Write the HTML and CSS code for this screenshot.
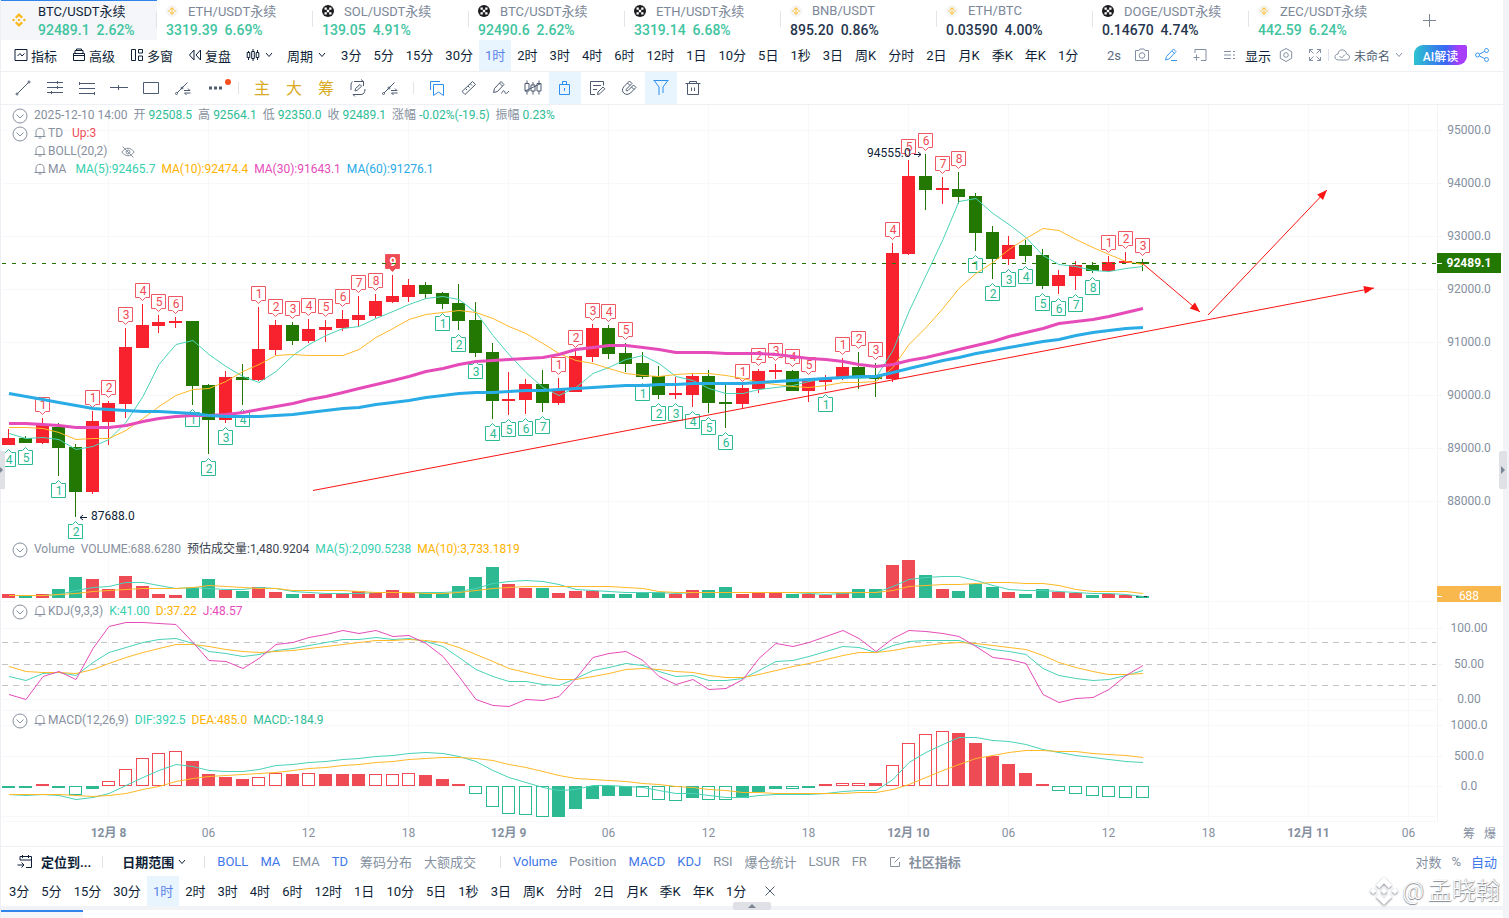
FILE: index.html
```
<!DOCTYPE html>
<html lang="zh-CN">
<head>
    <meta charset="UTF-8">
    <meta name="viewport" content="width=device-width, initial-scale=1.0">
    <title>BTC/USDT永续 92489.1</title>
    <link rel="stylesheet" href="styles.css">
</head>
<body>
    <!-- 图标 -->
    <svg class="sprite" aria-hidden="true">
        <symbol id="i-bnb" viewBox="0 0 14 14"><path fill="#fbb81c" d="M7 0l4 4-1.600 1.600L7 3.200 4.600 5.600 3 4zM1.600 5.400L3.200 7 1.600 8.600 0 7zM12.400 5.400L14 7l-1.600 1.600L10.800 7zM7 5.400L8.600 7 7 8.600 5.400 7zM3 10l1.600-1.600L7 10.800l2.400-2.400L11 10l-4 4z"/></symbol>
        <symbol id="i-bnb-round" viewBox="0 0 12 12"><circle cx="6" cy="6" r="6" fill="#f5f5f5"/><path fill="#fcc544" d="M6 2l2.200 2.200-1 1L6 4 4.800 5.200l-1-1zM3 5l1 1-1 1-1-1zM9 5l1 1-1 1-1-1zM6 5l1 1-1 1-1-1zM3.800 7.800l1-1L6 8l1.200-1.200 1 1L6 10z"/></symbol>
        <symbol id="i-okx" viewBox="0 0 12 12"><circle cx="6" cy="6" r="6" fill="#1b1b1f"/><path fill="#fff" d="M2.500 2.500h2.300v2.300H2.500zM7.200 2.500h2.300v2.300H7.200zM4.800 4.800h2.400v2.400H4.800zM2.500 7.200h2.300v2.300H2.500zM7.200 7.200h2.300v2.300H7.200z"/></symbol>
        <symbol id="i-down" viewBox="0 0 10 10"><path d="M2 3l3 3.500L8 3"/></symbol>
        <symbol id="i-indicator" viewBox="0 0 14 14"><path d="M1 1.500h12v11H1zM3.500 8L6 5.500 8 8l2.500-2.500"/></symbol>
        <symbol id="i-box" viewBox="0 0 14 14"><path d="M1.500 5.500h11v7h-11zM3 5.500v-3h8v3M4.500 2.500V1h5v1.500M1 7.500h12"/></symbol>
        <symbol id="i-multi" viewBox="0 0 14 14"><path d="M1.500 1.500h4v11h-4zM8.500 1.500h4v3.500h-4zM8.500 8h4v4.500h-4z"/></symbol>
        <symbol id="i-replay" viewBox="0 0 14 14"><path d="M6 2L1.500 7 6 12zM12.500 2L8 7l4.500 5z"/></symbol>
        <symbol id="i-candles" viewBox="0 0 14 14"><path d="M2.500 3v1.500M2.500 9.500V12M1.200 4.500h2.600v5H1.200zM7 1v2.500M7 10.500V13M5.700 3.500h2.600v7H5.700zM11.500 2v2.500M11.500 9.500V12M10.200 4.500h2.600v5h-2.600z"/></symbol>
        <symbol id="i-camera" viewBox="0 0 16 16"><path d="M1.500 3.500h3.500l1-1.500h4l1 1.500h3.500v10h-13z"/><circle cx="8" cy="8.500" r="2.800"/></symbol>
        <symbol id="i-pen" viewBox="0 0 16 16"><path d="M2.500 13l1-3.500 7-7.500 2.500 2.500-7 7.500zM9 4l2.500 2.500M8 13.500h6"/></symbol>
        <symbol id="i-addpane" viewBox="0 0 16 16"><path d="M3 6V2.500h11v11H9M1.500 10.500h6M4.500 7.500v6"/></symbol>
        <symbol id="i-list" viewBox="0 0 16 16"><path d="M3 4.500h7M3 8h7M3 11.500h7M12 4.500h2M12 8h2M12 11.500h2"/></symbol>
        <symbol id="i-hex" viewBox="0 0 16 16"><path d="M8 1.500l5.700 3.200v6.600L8 14.500l-5.700-3.200V4.700z"/><circle cx="8" cy="8" r="2.300"/></symbol>
        <symbol id="i-full" viewBox="0 0 16 16"><path d="M2.500 6V2.500H6M2.500 2.500L6.500 6.500M10 2.500h3.500V6M13.500 2.500l-4 4M2.500 10v3.500H6M2.500 13.500l4-4M13.500 10v3.500H10M13.500 13.500l-4-4"/></symbol>
        <symbol id="i-cloud" viewBox="0 0 16 16"><path d="M4.500 13C-.5 12.800.2 7 4 7c.3-5.500 8.200-5.500 8.500 0 4.200.5 3.800 6 0 6zM5.500 9l2 2 3.500-3.500"/></symbol>
        <symbol id="i-share" viewBox="0 0 16 16"><circle cx="3.500" cy="8" r="2"/><circle cx="12.500" cy="3.500" r="2"/><circle cx="12.500" cy="12.500" r="2"/><path d="M5.300 7.100l5.400-2.700M5.300 8.900l5.400 2.700"/></symbol>
        <symbol id="i-line" viewBox="0 0 18 18"><path d="M3.500 14.500l11-11"/><circle cx="3" cy="15" r="1"/><circle cx="15" cy="3" r="1"/></symbol>
        <symbol id="i-hlines" viewBox="0 0 18 18"><path d="M1 3.500h16M1 8.500h16M1 13.500h16M11.500 2v3M5.500 12v3M11.500 7v3"/></symbol>
        <symbol id="i-fib" viewBox="0 0 18 18"><path d="M1 4.500h16M1 9.500h16M1 14.500h16M1.500 3v3M16.500 13v3"/></symbol>
        <symbol id="i-hline" viewBox="0 0 18 18"><path d="M0 8.500h18M8.500 6v5"/></symbol>
        <symbol id="i-rect" viewBox="0 0 18 18"><path d="M1.500 3.500h15v11h-15z"/></symbol>
        <symbol id="i-swap" viewBox="0 0 18 18"><path d="M3 14L13.500 3.500M10 11.500h6l-2-2M16.500 14h-6l2 2"/><circle cx="2.500" cy="14.500" r="1"/><circle cx="8" cy="9" r="1"/></symbol>
        <symbol id="i-dots" viewBox="0 0 18 18"><path fill="currentColor" stroke="none" d="M3 7.500h3v3H3zM8 7.500h3v3H8zM13 7.500h3v3h-3z"/></symbol>
        <symbol id="i-redraw" viewBox="0 0 18 18"><path d="M5 2.500h9.500V7M12 .5L14.500 2.500M16 10c0 3-1 5.500-4 5.500H4L6 17.500M2 11V6c0-1.500.5-2.500 1.500-3.500M6 12l.5-2.500 4.500-4 1.700 1.700-4.500 4z"/></symbol>
        <symbol id="i-mark" viewBox="0 0 18 18"><path d="M2.500 11V2.500H12M5.500 5.500h10v11L10.500 13l-5 3.500z"/></symbol>
        <symbol id="i-ruler" viewBox="0 0 18 18"><path d="M2 12.500L12.500 2.500l3 3L5 15.500zM5.500 9.500L7 11M8 7l1.500 1.500M10.500 5L12 6.500"/></symbol>
        <symbol id="i-brush" viewBox="0 0 18 18"><path d="M1.500 13.500l1-4 6.500-7 3 3-6.500 7zM7.500 4l3 3M9.500 14.500c2-4 3-3 3.500-1s2 1 4-1.500"/></symbol>
        <symbol id="i-pattern" viewBox="0 0 18 18"><path d="M3 1.500v3M3 12v3.500M1 4.500h4V12H1zM9 3v3M9 12v3.500M7 6h4v6H7zM15 1.500v3M15 12v3.500M13 4.500h4V12h-4zM1 12L17 4.500"/></symbol>
        <symbol id="i-lock" viewBox="0 0 18 18"><path d="M3.500 5.500h10v10h-10zM6.500 5.500v-3h4v3M8.500 9v3"/></symbol>
        <symbol id="i-note" viewBox="0 0 18 18"><path d="M7 15.500H2.500v-13h13v4M5 6.500h8M5 10.500h4M9.500 15.500l.5-2.500 5-5 1.800 1.800-5 5z"/></symbol>
        <symbol id="i-magnet" viewBox="0 0 18 18"><path d="M9.500 2L4 7.500c-4.500 5 2 10.500 6.500 6.500L16 8.500 13.500 6 8 11.500c-1.500 1-2.500-.5-1.500-1.500L12 4.500zM7.500 4L10 6.500M11.500 8l2.500 2.500"/></symbol>
        <symbol id="i-filter" viewBox="0 0 18 18"><path d="M1.500 1.500h15M2.500 2l4.500 6v8M15.500 2L11 8v6"/></symbol>
        <symbol id="i-trash" viewBox="0 0 18 18"><path d="M1.500 4.500h15M5.500 4.500v-2h7v2M3.500 4.500v11h11v-11M7.500 8.500v3.500M10.500 8.500v3.500"/></symbol>
        <symbol id="i-fold" viewBox="0 0 16 16"><circle cx="8" cy="8" r="7"/><path d="M4.500 6.500L8 10l3.500-3.500"/></symbol>
        <symbol id="i-bell" viewBox="0 0 12 12"><path d="M0.500 9.500h11M2 9.500V5c0-5 8-5 8 0v4.500M4.500 11h3"/></symbol>
        <symbol id="i-eye" viewBox="0 0 14 12"><path d="M1 6c3-5 9-5 12 0-3 5-9 5-12 0zM1.500.5l11 11"/><circle cx="7" cy="6" r="2"/></symbol>
        <symbol id="i-goto" viewBox="0 0 16 16"><path d="M3 6V2.500h11.500v11H9M3 6h11M5.500 1v3M11.500 1v3M.500 11h6M4.500 8.500L7 11l-2.500 2.500"/></symbol>
        <symbol id="i-edit" viewBox="0 0 12 12"><path d="M6 1.500H1.500v9h9V6M5.500 6.500L10.500 1.500"/></symbol>
        <symbol id="i-close" viewBox="0 0 12 12"><path d="M1.500 1.500l9 9M10.500 1.500l-9 9"/></symbol>
    </svg>

    <div class="shell">
        <nav class="tabs">
            <a class="tab tab-active" href="#"><svg class="ico-lg"><use href="#i-bnb"/></svg><span class="tab-name">BTC/USDT永续</span><span class="tab-price up">92489.1&nbsp; 2.62%</span></a>
            <a class="tab" href="#"><svg class="ico-sm"><use href="#i-bnb-round"/></svg><span class="tab-name">ETH/USDT永续</span><span class="tab-price up">3319.39&nbsp; 6.69%</span></a>
            <a class="tab" href="#"><svg class="ico-sm"><use href="#i-okx"/></svg><span class="tab-name">SOL/USDT永续</span><span class="tab-price up">139.05&nbsp; 4.91%</span></a>
            <a class="tab" href="#"><svg class="ico-sm"><use href="#i-okx"/></svg><span class="tab-name">BTC/USDT永续</span><span class="tab-price up">92490.6&nbsp; 2.62%</span></a>
            <a class="tab" href="#"><svg class="ico-sm"><use href="#i-okx"/></svg><span class="tab-name">ETH/USDT永续</span><span class="tab-price up">3319.14&nbsp; 6.68%</span></a>
            <a class="tab" href="#"><svg class="ico-sm"><use href="#i-bnb-round"/></svg><span class="tab-name">BNB/USDT</span><span class="tab-price">895.20&nbsp; 0.86%</span></a>
            <a class="tab" href="#"><svg class="ico-sm"><use href="#i-bnb-round"/></svg><span class="tab-name">ETH/BTC</span><span class="tab-price">0.03590&nbsp; 4.00%</span></a>
            <a class="tab" href="#"><svg class="ico-sm"><use href="#i-okx"/></svg><span class="tab-name">DOGE/USDT永续</span><span class="tab-price">0.14670&nbsp; 4.74%</span></a>
            <a class="tab" href="#"><svg class="ico-sm"><use href="#i-bnb-round"/></svg><span class="tab-name">ZEC/USDT永续</span><span class="tab-price up">442.59&nbsp; 6.24%</span></a>
            <button class="tab-add" aria-label="添加"></button>
        </nav>

        <div class="bar bar-main">
            <button class="menu"><svg class="ico"><use href="#i-indicator"/></svg>指标</button>
            <button class="menu"><svg class="ico"><use href="#i-box"/></svg>高级</button>
            <button class="menu"><svg class="ico"><use href="#i-multi"/></svg>多窗</button>
            <button class="menu"><svg class="ico"><use href="#i-replay"/></svg>复盘</button>
            <button class="menu menu-drop"><svg class="ico"><use href="#i-candles"/></svg><svg class="chev"><use href="#i-down"/></svg></button>
            <button class="menu menu-drop">周期<svg class="chev"><use href="#i-down"/></svg></button>
            <div class="periods"></div>
            <div class="bar-right">
                <span class="delay">2s</span>
                <button class="tool" aria-label="截图"><svg class="ico-m"><use href="#i-camera"/></svg></button>
                <button class="tool blue" aria-label="画图"><svg class="ico-m"><use href="#i-pen"/></svg></button>
                <button class="tool" aria-label="添加窗口"><svg class="ico-m"><use href="#i-addpane"/></svg></button>
                <button class="tool show"><svg class="ico-m"><use href="#i-list"/></svg>显示</button>
                <button class="tool" aria-label="设置"><svg class="ico-m"><use href="#i-hex"/></svg></button>
                <button class="tool" aria-label="全屏"><svg class="ico-m"><use href="#i-full"/></svg></button>
                <i class="sep"></i>
                <button class="layout"><svg class="ico-m"><use href="#i-cloud"/></svg>未命名<svg class="chev"><use href="#i-down"/></svg></button>
                <button class="ai">AI解读</button>
                <button class="tool blue" aria-label="分享"><svg class="ico-m"><use href="#i-share"/></svg></button>
            </div>
        </div>

        <div class="bar bar-draw">
            <button class="draw" aria-label="线段"><svg><use href="#i-line"/></svg></button>
            <button class="draw" aria-label="平行线"><svg><use href="#i-hlines"/></svg></button>
            <button class="draw" aria-label="斐波那契"><svg><use href="#i-fib"/></svg></button>
            <button class="draw" aria-label="水平线"><svg><use href="#i-hline"/></svg></button>
            <button class="draw" aria-label="矩形"><svg><use href="#i-rect"/></svg></button>
            <button class="draw" aria-label="切换"><svg><use href="#i-swap"/></svg></button>
            <button class="draw draw-more" aria-label="更多"><svg><use href="#i-dots"/></svg></button>
            <i class="sep"></i>
            <button class="draw gold">主</button>
            <button class="draw gold">大</button>
            <button class="draw gold">筹</button>
            <button class="draw" aria-label="重画"><svg><use href="#i-redraw"/></svg></button>
            <button class="draw" aria-label="线段切换"><svg><use href="#i-swap"/></svg></button>
            <i class="sep"></i>
            <button class="draw blue" aria-label="书签"><svg><use href="#i-mark"/></svg></button>
            <button class="draw" aria-label="测量"><svg><use href="#i-ruler"/></svg></button>
            <button class="draw" aria-label="画笔"><svg><use href="#i-brush"/></svg></button>
            <button class="draw" aria-label="形态"><svg><use href="#i-pattern"/></svg></button>
            <button class="draw draw-on" aria-label="锁定"><svg><use href="#i-lock"/></svg></button>
            <button class="draw" aria-label="备注"><svg><use href="#i-note"/></svg></button>
            <button class="draw" aria-label="磁铁"><svg><use href="#i-magnet"/></svg></button>
            <button class="draw draw-on" aria-label="过滤"><svg><use href="#i-filter"/></svg></button>
            <button class="draw" aria-label="删除"><svg><use href="#i-trash"/></svg></button>
        </div>

        <main class="chart">
            <section class="pane pane-price">
                <svg class="plot" id="price"></svg>
                <svg class="axis" id="price-axis"></svg>
                <div class="legend">
                    <p><svg class="fold"><use href="#i-fold"/></svg><span>2025-12-10 14:00</span><span>开 <b class="up">92508.5</b></span><span>高 <b class="up">92564.1</b></span><span>低 <b class="up">92350.0</b></span><span>收 <b class="up">92489.1</b></span><span>涨幅 <b class="up">-0.02%(-19.5)</b></span><span>振幅 <b class="up">0.23%</b></span></p>
                    <p><svg class="fold"><use href="#i-fold"/></svg><span class="name"><svg class="bell"><use href="#i-bell"/></svg>TD</span><span class="down">Up:3</span></p>
                    <p><span class="name"><svg class="bell"><use href="#i-bell"/></svg>BOLL(20,2)</span><svg class="eye"><use href="#i-eye"/></svg></p>
                    <p><span class="name"><svg class="bell"><use href="#i-bell"/></svg>MA</span><span class="teal">MA(5):92465.7</span><span class="orange">MA(10):92474.4</span><span class="pink">MA(30):91643.1</span><span class="sky">MA(60):91276.1</span></p>
                </div>
            </section>
            <section class="pane pane-vol">
                <svg class="plot" id="vol"></svg>
                <svg class="axis" id="vol-axis"></svg>
                <div class="legend">
                    <p><svg class="fold"><use href="#i-fold"/></svg><span>Volume</span><span>VOLUME:688.6280</span><span class="dark">预估成交量:1,480.9204</span><span class="teal">MA(5):2,090.5238</span><span class="orange">MA(10):3,733.1819</span></p>
                </div>
            </section>
            <section class="pane pane-kdj">
                <svg class="plot" id="kdj"></svg>
                <svg class="axis" id="kdj-axis"></svg>
                <div class="legend">
                    <p><svg class="fold"><use href="#i-fold"/></svg><span><svg class="bell"><use href="#i-bell"/></svg>KDJ(9,3,3)</span><span class="teal">K:41.00</span><span class="orange">D:37.22</span><span class="pink">J:48.57</span></p>
                </div>
            </section>
            <section class="pane pane-macd">
                <svg class="plot" id="macd"></svg>
                <svg class="axis" id="macd-axis"></svg>
                <div class="legend">
                    <p><svg class="fold"><use href="#i-fold"/></svg><span><svg class="bell"><use href="#i-bell"/></svg>MACD(12,26,9)</span><span class="teal">DIF:392.5</span><span class="orange">DEA:485.0</span><span class="up">MACD:-184.9</span></p>
                </div>
            </section>
            <section class="pane pane-time">
                <svg class="plot" id="time"></svg>
                <div class="axis axis-btns"><button>筹</button><button>爆</button></div>
            </section>
        </main>

        <div class="bar bar-ind">
            <button class="goto"><svg class="ico-m"><use href="#i-goto"/></svg>定位到...</button>
            <i class="sep"></i>
            <button class="range">日期范围<svg class="chev"><use href="#i-down"/></svg></button>
            <i class="sep"></i>
            <div class="inds">
                <button class="on">BOLL</button><button class="on">MA</button><button>EMA</button><button class="on">TD</button><button>筹码分布</button><button>大额成交</button>
            </div>
            <i class="sep"></i>
            <div class="inds">
                <button class="on">Volume</button><button>Position</button><button class="on">MACD</button><button class="on">KDJ</button><button>RSI</button><button>爆仓统计</button><button>LSUR</button><button>FR</button>
            </div>
            <button class="community"><svg class="ico-xs"><use href="#i-edit"/></svg>社区指标</button>
            <div class="inds scale"><button>对数</button><button>%</button><button class="on">自动</button></div>
        </div>
        <div class="bar bar-periods">
            <div class="periods"></div>
            <button class="close" aria-label="关闭"><svg class="ico-sm"><use href="#i-close"/></svg></button>
            <button class="pull pull-bottom" aria-label="展开"></button>
        </div>
        <div class="next"><span class="next-tab"></span></div>

        <button class="pull pull-left" aria-label="展开左侧"></button>
        <button class="pull pull-right" aria-label="展开右侧"></button>
        <div class="watermark"><svg><use href="#i-bnb"/></svg><span>@</span><span>孟晓翰</span></div>
    </div>
    <script src="chart.js"></script>
</body>
</html>
```
FILE: styles.css
```
* {
    box-sizing: border-box;
}

body {
    margin: 0;
    background: #f2f3f7;
    color: #0f1f38;
    font-family: Roboto, "Noto Sans CJK SC", sans-serif;
    font-size: 13px;
    overflow: hidden;
}

button {
    margin: 0;
    padding: 0;
    border: 0;
    background: none;
    color: inherit;
    font: inherit;
    white-space: nowrap;
    cursor: pointer;
}

svg {
    display: block;
    flex: none;
    fill: none;
    stroke: currentColor;
}

.sprite {
    position: absolute;
    width: 0;
    height: 0;
}

.sprite [fill] {
    stroke: none;
}

.shell {
    position: relative;
    min-height: 100vh;
    margin-right: 6px;
    border-left: 1px solid #edeff4;
    background: #fff;
}

.up { color: #2ebd96; }
.down { color: #f04c57; }
.teal { color: #36cfb0; }
.orange { color: #ffb200; }
.pink { color: #e64cb9; }
.sky { color: #2aa9e6; }
.dark { color: #3c4350; }
.blue { color: #3185ea; }

.ico, .ico-lg { width: 14px; height: 14px; }
.ico-sm { width: 12px; height: 12px; }
.ico-xs { width: 12px; height: 12px; }
.ico-m { width: 16px; height: 16px; }
.chev { width: 10px; height: 10px; }

/* 顶部标签 */
.tabs {
    display: flex;
    height: 40px;
}

.tab {
    position: relative;
    display: grid;
    grid-template-columns: 22px auto;
    grid-template-rows: 20px 18px;
    align-items: center;
    align-content: start;
    justify-content: start;
    width: 156px;
    padding: 1px 0 0 9px;
    color: #7c8798;
    text-decoration: none;
}

.tab::after {
    content: "";
    position: absolute;
    right: 0;
    top: 11px;
    height: 16px;
    border-right: 1px solid #e3e5ea;
}

.tab:nth-child(9)::after {
    display: none;
}

.tab-name {
    padding-bottom: 2px;
}

.tab-price {
    grid-column: 1 / 3;
    color: #26364e;
    font-size: 14px;
    font-weight: 500;
}

.tab-price.up {
    color: #41c49f;
}

.tab-active {
    grid-template-columns: 26px auto;
    padding: 0 0 0 11px;
    border-top: 1px solid #3185ea;
    background: #f5f6fa;
    color: #0f1f38;
}

.tab-active svg {
    grid-row: 1 / 3;
}

.tab-active .tab-price {
    grid-column: 2;
}

.tab-add {
    position: relative;
    width: 14px;
    margin-left: 17px;
    background: linear-gradient(#7d8694, #7d8694) center / 13px 1px no-repeat, linear-gradient(#7d8694, #7d8694) center / 1px 13px no-repeat;
}

/* 工具栏 */
.bar {
    display: flex;
    align-items: center;
}

.bar-main {
    height: 32px;
    padding: 0 13px 1px 13px;
    border-bottom: 1px solid #eff0f3;
}

.menu {
    display: flex;
    align-items: center;
    gap: 3px;
    margin-right: 15px;
}

.menu-drop {
    gap: 4px;
    margin-right: 13px;
}

.menu-drop + .menu-drop {
    margin-right: 8px;
}

.periods {
    display: flex;
    height: 31px;
}

.periods button {
    padding: 0 6px 2px;
}

.periods .current {
    background: #e8f4fe;
    color: #5b83ec;
}

.bar-right {
    display: flex;
    align-items: center;
    gap: 13px;
    margin-left: auto;
    color: #8390a3;
}

.bar-right .sep {
    margin: 0 -8px;
}

.bar-right .blue {
    color: #3b98ee;
}

.delay {
    color: #5d6b80;
}

.show {
    display: flex;
    align-items: center;
    gap: 8px;
    margin-right: -6px;
    color: #0f1f38;
}

.show svg {
    color: #8390a3;
}

.layout {
    display: flex;
    align-items: center;
    gap: 4px;
    margin-right: -3px;
    color: #4d5b70;
    font-size: 12px;
}

.layout svg {
    color: #8390a3;
}

.ai {
    width: 53px;
    height: 20px;
    margin-right: -6px;
    border-radius: 9px 2px 9px 0;
    background: linear-gradient(90deg, #2cc4cf, #3a66f5 60%, #a83dfb 85%);
    color: #fff;
    font-size: 12px;
    font-weight: 500;
}

.sep {
    flex: none;
    width: 1px;
    height: 12px;
    background: #dfe2e7;
}

.bar-draw {
    height: 33px;
    padding-left: 6px;
    border-bottom: 1px solid #eff0f3;
    color: #4c5b70;
}

.bar-draw .sep {
    margin: 0 7px;
}

.draw {
    position: relative;
    display: flex;
    align-items: center;
    justify-content: center;
    width: 32px;
    height: 32px;
}

.draw svg {
    width: 18px;
    height: 18px;
}

.draw-on {
    background: #e8f4fe;
    color: #2d8ff0;
}

.draw.blue {
    color: #2d8ff0;
}

.draw-more::after {
    content: "";
    position: absolute;
    right: 0;
    top: 7px;
    width: 6px;
    height: 6px;
    border-radius: 3px;
    background: #f5501e;
}

.gold {
    padding-bottom: 2px;
    color: #d9ab25;
    font-size: 16px;
}

/* 图表 */
.pane {
    position: relative;
    display: flex;
}

.plot {
    flex: 1;
    min-width: 0;
}

.plot, .axis {
    height: 100%;
    stroke: none;
    font-size: 12px;
}

.axis {
    width: 66px;
    color: #8590a0;
}

.pane-price { height: 435px; }
.pane-vol { height: 62px; }
.pane-kdj { height: 109px; }
.pane-macd { height: 111px; }
.pane-time { height: 24px; }

.pane-price .legend {
    top: 1px;
}

.legend {
    position: absolute;
    top: 0;
    left: 33px;
    color: #87909e;
    font-size: 12px;
    line-height: 18px;
    white-space: nowrap;
}

.legend p {
    position: relative;
    display: flex;
    gap: 6px;
    height: 18px;
    margin: 0;
}

.legend b {
    font-weight: 400;
}

.legend span {
    display: flex;
    gap: 3px;
    align-items: center;
}

.legend .name {
    margin-right: 3px;
}

.fold {
    position: absolute;
    left: -22px;
    top: 2px;
    width: 16px;
    height: 16px;
}

.bell {
    width: 12px;
    height: 12px;
    margin-right: -1px;
}

.eye {
    width: 14px;
    height: 12px;
    margin: 4px 0 0 4px;
}

.grid line { stroke: #f8f8fa; }
.grid .dash { stroke: #c4c4c4; stroke-dasharray: 6 5; }
.last { stroke: #237804; stroke-dasharray: 4 6; }
.candle { shape-rendering: crispEdges; }
.rise { fill: #f8222e; stroke: #f8222e; }
.fall { fill: #237804; stroke: #237804; }
.candle rect, .bars rect { stroke: none; }
.pos { fill: #ef4b55; }
.neg { fill: #2dba93; }
.bars .pos-h { fill: #fff; stroke: #ef4b55; }
.bars .neg-h { fill: #fff; stroke: #2dba93; }
.estimate { stroke: #26364e; stroke-dasharray: 3 1; }
.curve { fill: none; stroke-width: 1; stroke-linejoin: round; }
.curve.thick { stroke-width: 3; }
.curve.teal { stroke: #4ad3b8; }
.curve.orange { stroke: #ffb929; }
.curve.pink { stroke: #e64cb9; }
.curve.sky { stroke: #29abe6; }
.td path { fill: #fff; }
.td text { font-size: 12px; text-anchor: middle; }
.td-up path { stroke: #ef5862; }
.td-up text { fill: #ef4b55; }
.td-down path { stroke: #2dba93; }
.td-down text { fill: #2dba93; }
.td-full path { fill: #ef4b55; }
.td-full text { fill: #fff; font-weight: 700; }
.trend { stroke: #fb1414; fill: none; }
.trend-head { fill: #fb1414; }
.extreme { fill: #0f1f38; font-size: 12px; }
.extreme-arrow { fill: none; stroke: #0f1f38; }
.axis text, .day, .hour { fill: #8590a0; text-anchor: middle; }
.day { font-weight: 700; }
.axis .tag-price, .axis .tag-vol { fill: #fff; }
.axis .tag-price { font-weight: 700; }
.axis line { stroke: #f3f4f6; }
.axis .tag-tick { stroke: #fff; }

.axis-btns {
    display: flex;
    align-items: center;
    gap: 9px;
    padding: 0 0 4px 26px;
}

/* 底部 */
.bar-ind {
    height: 30px;
    padding: 0 6px 0 16px;
    border-top: 1px solid #eff0f3;
    color: #8590a0;
}

.goto, .range, .community {
    display: flex;
    align-items: center;
    font-weight: 700;
}

.goto, .range {
    color: #0f1f38;
}

.goto {
    gap: 8px;
    margin-right: 11px;
}

.range {
    gap: 3px;
    margin: 0 17px 0 19px;
}

.inds {
    display: flex;
    gap: 12px;
    margin: 0 22px 0 12px;
}

.inds + .sep {
    margin-left: 2px;
}

.inds .on {
    color: #3f78ea;
}

.community {
    gap: 8px;
    color: #87909e;
}

.scale {
    gap: 10px;
    margin: 0 0 0 auto;
}

.bar-periods {
    position: relative;
    height: 34px;
    padding-left: 2px;
    border-bottom: 4px solid #f2f3f7;
}

.bar-periods .periods {
    height: 30px;
}

.close {
    margin-left: 12px;
    color: #4c5b70;
}

.next {
    height: 8px;
}

.next-tab {
    display: block;
    width: 82px;
    height: 8px;
    border-top: 2px solid #3185ea;
    background: #f5f6fa;
}

.pull {
    position: absolute;
    display: flex;
    align-items: center;
    justify-content: center;
    background: #dfe1e7;
}

.pull::after {
    content: "";
    border: 4px solid transparent;
}

.pull-left {
    left: -1px;
    top: 451px;
    width: 5px;
    height: 38px;
}

.pull-left::after {
    border-width: 3px;
    border-left-color: #7d8694;
}

.pull-right {
    right: -4px;
    top: 451px;
    width: 8px;
    height: 38px;
    border-radius: 2px;
}

.pull-right::after {
    margin-left: 4px;
    border-left-color: #7d8694;
}

.pull-bottom {
    left: 732px;
    bottom: -4px;
    width: 38px;
    height: 8px;
    border-radius: 2px;
}

.pull-bottom::after {
    margin-bottom: 4px;
    border-bottom-color: #7d8694;
}

.watermark {
    position: absolute;
    right: 3px;
    top: 876px;
    display: flex;
    align-items: center;
    gap: 4px;
    height: 30px;
    color: #fff;
    font-size: 24px;
    font-weight: 300;
    line-height: 30px;
    text-shadow: 0 1px 1px #7d828c, 1px 0 1px #a4a8b0;
}

.watermark svg {
    width: 28px;
    height: 28px;
    filter: grayscale(1) brightness(2) drop-shadow(0 1px 1px #7d828c);
}
```
FILE: chart.js
```
// 周期按钮（顶部和底部共用）
const periods = ["3分", "5分", "15分", "30分", "1时", "2时", "3时", "4时", "6时", "12时", "1日", "10分", "5日", "1秒", "3日", "周K", "分时", "2日", "月K", "季K", "年K", "1分"];

document.querySelectorAll(".periods").forEach(box => {
    box.innerHTML = periods.map(p => `<button${p === "1时" ? ' class="current"' : ""}>${p}</button>`).join("");
});

// K线: 方向, 实体上, 实体下, 最高, 最低
const candles = [
    ["r", 438, 445, 429, 445], ["g", 438, 443, 436, 443], ["r", 425, 443, 418, 444], ["g", 427, 448, 423, 476],
    ["g", 447, 492, 444, 517], ["r", 421, 492, 411, 494], ["r", 403, 422, 401, 445], ["r", 347, 404, 328, 418],
    ["r", 325, 348, 304, 348], ["r", 322, 326, 315, 333], ["r", 321, 323, 317, 328], ["g", 321, 386, 321, 405],
    ["g", 385, 420, 384, 454], ["r", 377, 420, 371, 423], ["g", 377, 380, 364, 405], ["r", 349, 380, 307, 381],
    ["r", 325, 350, 320, 355], ["g", 325, 341, 322, 345], ["r", 329, 341, 319, 343], ["r", 327, 330, 320, 342],
    ["r", 319, 328, 310, 331], ["r", 315, 320, 296, 326], ["r", 301, 316, 294, 318], ["r", 296, 302, 275, 303],
    ["r", 285, 297, 279, 302], ["g", 285, 294, 282, 299], ["g", 293, 304, 292, 309], ["g", 303, 321, 284, 330],
    ["g", 320, 353, 302, 357], ["g", 352, 401, 343, 419], ["r", 399, 401, 372, 415], ["r", 384, 400, 379, 414],
    ["g", 384, 403, 370, 412], ["r", 390, 403, 378, 405], ["r", 356, 392, 351, 392], ["r", 328, 357, 324, 362],
    ["g", 328, 354, 325, 359], ["g", 353, 364, 343, 372], ["g", 363, 377, 352, 379], ["g", 376, 395, 366, 399],
    ["r", 393, 395, 377, 399], ["r", 376, 395, 373, 407], ["g", 376, 403, 370, 413], ["g", 402, 404, 385, 428],
    ["r", 388, 404, 385, 409], ["r", 371, 389, 369, 393], ["r", 370, 372, 364, 379], ["g", 371, 391, 370, 391],
    ["r", 381, 391, 378, 402], ["r", 379, 382, 375, 390], ["r", 367, 377, 358, 380], ["g", 367, 376, 352, 389],
    ["g", 376, 379, 363, 397], ["r", 253, 379, 243, 382], ["r", 176, 254, 160, 255], ["g", 176, 190, 154, 210],
    ["r", 188, 190, 177, 204], ["g", 189, 197, 172, 204], ["g", 196, 233, 193, 251], ["g", 232, 259, 226, 279],
    ["r", 245, 259, 236, 265], ["g", 245, 256, 240, 262], ["g", 255, 286, 249, 289], ["r", 275, 286, 270, 294],
    ["r", 265, 276, 261, 290], ["g", 265, 271, 262, 273], ["r", 262, 271, 256, 272], ["r", 261, 263, 252, 263],
    ["g", 262, 264, 259, 271]
];

// TD 序列: K线序号 -> 计数
const tdUp = { 2: 1, 5: 1, 6: 2, 7: 3, 8: 4, 9: 5, 10: 6, 15: 1, 16: 2, 17: 3, 18: 4, 19: 5, 20: 6, 21: 7, 22: 8, 23: 9, 33: 1, 34: 2, 35: 3, 36: 4, 37: 5, 44: 1, 45: 2, 46: 3, 47: 4, 48: 5, 50: 1, 51: 2, 52: 3, 53: 4, 54: 5, 55: 6, 56: 7, 57: 8, 66: 1, 67: 2, 68: 3 };
const tdDown = { 0: 4, 1: 5, 3: 1, 4: 2, 11: 1, 12: 2, 13: 3, 14: 4, 26: 1, 27: 2, 28: 3, 29: 4, 30: 5, 31: 6, 32: 7, 38: 1, 39: 2, 40: 3, 41: 4, 42: 5, 43: 6, 49: 1, 58: 1, 59: 2, 60: 3, 61: 4, 62: 5, 63: 6, 64: 7, 65: 8 };

const ma5 = [433, 438, 437, 439, 449, 446, 439, 422, 396, 364, 344, 340, 354, 366, 376, 382, 371, 355, 344, 335, 328, 326, 318, 311, 304, 298, 296, 299, 312, 335, 354, 372, 387, 395, 387, 373, 367, 359, 355, 363, 376, 380, 388, 393, 393, 389, 387, 385, 381, 378, 377, 378, 377, 350, 311, 275, 239, 201, 198, 213, 224, 237, 255, 264, 266, 270, 271, 268, 266];
const ma10 = [427, 427, 428, 432, 439, 438, 438, 430, 418, 406, 395, 389, 388, 381, 371, 364, 355, 354, 355, 355, 355, 349, 337, 328, 319, 314, 312, 310, 312, 318, 326, 333, 343, 353, 360, 363, 368, 373, 375, 376, 374, 373, 373, 375, 378, 382, 384, 386, 387, 385, 382, 382, 381, 367, 344, 327, 308, 288, 273, 262, 249, 238, 228, 230, 239, 247, 254, 261, 264];
const ma30 = [423, 423, 424, 425, 427, 427, 427, 425, 421, 418, 416, 415, 415, 414, 412, 409, 406, 403, 399, 396, 392, 388, 384, 380, 376, 371, 368, 364, 361, 360, 359, 358, 357, 354, 349, 347, 345, 345, 347, 349, 352, 352, 352, 353, 353, 353, 354, 356, 358, 359, 361, 364, 366, 364, 360, 357, 353, 349, 345, 341, 336, 332, 328, 323, 321, 319, 316, 312, 308];
const ma60 = [393, 396, 399, 402, 405, 408, 409, 410, 411, 411, 412, 413, 415, 416, 416, 416, 415, 414, 412, 410, 408, 407, 404, 402, 400, 397, 395, 393, 392, 392, 391, 390, 390, 389, 388, 387, 386, 385, 385, 384, 384, 383, 383, 383, 383, 382, 381, 380, 379, 378, 377, 376, 376, 372, 368, 364, 360, 357, 353, 350, 347, 344, 341, 339, 335, 332, 330, 328, 327];

// 成交量
const vols = [594, 596, 594, 589, 577, 579, 589, 576, 586, 594, 595, 588, 579, 590, 591, 587, 592, 594, 594, 594, 593, 591, 593, 590, 593, 592, 593, 586, 577, 567, 584, 588, 588, 593, 591, 591, 594, 594, 592, 592, 594, 590, 590, 587, 594, 592, 592, 594, 594, 595, 593, 589, 589, 565, 560, 575, 589, 591, 584, 587, 592, 594, 589, 592, 593, 595, 594, 595, 596];
const volMa5 = [595, 595, 595, 594, 590, 587, 586, 582, 582, 585, 588, 587, 588, 589, 589, 587, 588, 591, 592, 593, 593, 593, 592, 592, 592, 592, 592, 591, 588, 583, 581, 580, 581, 584, 589, 590, 591, 592, 592, 592, 593, 592, 592, 592, 592, 592, 592, 592, 593, 594, 593, 592, 592, 586, 579, 577, 576, 576, 580, 585, 589, 590, 590, 591, 592, 593, 593, 594, 596];
const volMa10 = [595, 595, 595, 594, 593, 591, 590, 589, 588, 588, 588, 587, 585, 586, 587, 588, 588, 590, 590, 590, 590, 591, 592, 592, 592, 593, 593, 592, 590, 588, 587, 586, 586, 586, 586, 586, 586, 587, 588, 591, 592, 592, 592, 592, 592, 592, 592, 592, 592, 592, 592, 592, 592, 590, 586, 585, 584, 584, 583, 582, 582, 583, 583, 585, 589, 591, 591, 591, 593];

// KDJ
const kLine = [676, 680, 673, 672, 675, 662, 652, 647, 642, 639, 638, 643, 651, 653, 656, 654, 650, 648, 645, 642, 639, 639, 637, 639, 638, 641, 646, 657, 669, 676, 681, 681, 684, 685, 678, 670, 667, 663, 665, 671, 676, 675, 680, 680, 678, 670, 661, 660, 656, 651, 646, 647, 652, 645, 641, 640, 640, 640, 645, 649, 651, 654, 668, 675, 678, 680, 679, 675, 670];
const dLine = [666, 671, 672, 672, 673, 669, 663, 657, 652, 648, 644, 644, 646, 649, 651, 652, 651, 650, 648, 646, 644, 642, 640, 640, 639, 640, 642, 647, 654, 661, 668, 672, 676, 679, 679, 676, 673, 669, 668, 669, 671, 672, 675, 677, 677, 674, 670, 666, 663, 659, 655, 652, 652, 650, 647, 645, 643, 642, 643, 645, 647, 649, 655, 662, 667, 671, 674, 674, 673];
const jLine = [694, 699, 676, 671, 679, 648, 626, 622, 622, 623, 624, 642, 660, 661, 668, 658, 644, 642, 637, 634, 630, 633, 630, 636, 635, 643, 656, 676, 699, 705, 706, 699, 700, 696, 678, 657, 653, 651, 660, 676, 684, 679, 689, 688, 679, 658, 643, 646, 642, 636, 630, 638, 651, 638, 630, 631, 633, 636, 646, 657, 659, 663, 694, 702, 698, 697, 689, 675, 665];

// MACD 柱: 负号表示空心
const macd = [788, 788, 784, 788, -795, 789, -781, -769, -758, -753, -751, 761, 774, 777, 779, -777, -773, 774, -773, 774, 774, 774, -774, -774, -773, 775, 779, 784, -794, -807, -814, -815, -817, 817, 809, 799, 796, 796, -797, -800, -801, 798, -800, -800, 798, 792, 789, -789, 788, 784, -783, -783, 783, -765, -743, -734, -731, 733, 743, 756, 764, 773, 784, -791, -794, -796, -797, -798, -798];
const dif = [794, 795, 794, 795, 799, 797, 793, 785, 777, 770, 764, 766, 770, 771, 771, 769, 765, 764, 762, 761, 759, 758, 756, 755, 753, 752, 753, 756, 761, 770, 777, 782, 787, 790, 789, 785, 785, 786, 787, 790, 793, 793, 795, 797, 797, 795, 794, 794, 794, 793, 791, 790, 790, 779, 762, 752, 744, 737, 737, 740, 741, 744, 749, 752, 755, 757, 759, 761, 762];
const dea = [794, 794, 794, 794, 795, 796, 795, 793, 789, 786, 781, 778, 776, 775, 774, 773, 772, 770, 768, 767, 765, 764, 762, 761, 759, 758, 757, 757, 758, 760, 764, 767, 771, 775, 778, 779, 780, 781, 783, 784, 786, 787, 789, 790, 792, 792, 793, 793, 793, 793, 793, 792, 792, 789, 784, 777, 770, 764, 758, 755, 752, 750, 750, 751, 751, 753, 754, 755, 757];

const step = 100 / 6;
const cx = i => Math.round(8.4 + step * i) + 0.5;

function curve(data, cls) {
    return `<polyline class="curve ${cls}" points="${data.map((y, i) => (cx(i) + 0.5) + "," + (y + 0.5)).join(" ")}"/>`;
}

// 网格, 每 100px 为 6 小时
function grid(top, bottom, rows, dashes = []) {
    let out = "";
    for (let x = 108.5; x < 1430; x += 100) {
        out += `<line x1="${x}" x2="${x}" y1="${top}" y2="${bottom}"/>`;
    }
    rows.forEach(y => out += `<line x1="2" x2="100%" y1="${y}" y2="${y}"/>`);
    dashes.forEach(y => out += `<line class="dash" x1="2" x2="100%" y1="${y}" y2="${y}"/>`);
    return `<g class="grid">${out}</g>`;
}

function tdMark(i, n, up) {
    const x = cx(i);
    const tip = up ? candles[i][3] - 3.5 : candles[i][4] + 4.5;
    const s = up ? -1 : 1;
    const near = tip + 3 * s;
    const far = tip + 17 * s;
    const cls = (up ? "td-up" : "td-down") + (n === 9 ? " td-full" : "");
    return `<g class="td ${cls}"><path d="M${x} ${tip}L${x + 3} ${near}H${x + 7}V${far}H${x - 7}V${near}H${x - 3}Z"/><text x="${x + 0.5}" y="${(near + far) / 2 + 4}">${n}</text></g>`;
}

function arrow(x1, y1, x2, y2) {
    const a = Math.atan2(y2 - y1, x2 - x1) * 180 / Math.PI;
    return `<line class="trend" x1="${x1}" y1="${y1}" x2="${x2}" y2="${y2}"/><path class="trend-head" transform="translate(${x2} ${y2}) rotate(${a})" d="M0 0L-10 -4V4Z"/>`;
}

function draw(id, top, html) {
    document.getElementById(id).innerHTML = `<g transform="translate(-1 ${-top})">${html}</g>`;
}

function drawAxis(id, top, labels, extra = "") {
    let out = "";
    labels.forEach(([t, y]) => out += `<line x1="0" x2="5" y1="${y}" y2="${y}"/><text x="32" y="${y + 3.5}">${t}</text>`);
    document.getElementById(id).innerHTML = `<g transform="translate(0 ${-top})"><line x1="0.5" x2="0.5" y1="${top}" y2="${top + 435}"/>${out}${extra}</g>`;
}

// 价格
let body = grid(105, 540, [130.5, 183.5, 236.5, 289.5, 342.5, 395.5, 448.5, 501.5, 540.5]);
candles.forEach(([d, t, b, h, l], i) => {
    const x = cx(i);
    body += `<g class="candle ${d === "r" ? "rise" : "fall"}"><line x1="${x}" x2="${x}" y1="${h}" y2="${l}"/><rect x="${x - 6.5}" y="${t}" width="13" height="${b - t}"/></g>`;
});
for (const i in tdUp) body += tdMark(+i, tdUp[i], true);
for (const i in tdDown) body += tdMark(+i, tdDown[i], false);
body += curve(ma5, "teal") + curve(ma10, "orange") + curve(ma30, "pink thick") + curve(ma60, "sky thick");
body += `<line class="last" x1="2" x2="100%" y1="263.5" y2="263.5"/>`;
body += arrow(313, 490.5, 1374, 288) + arrow(1142, 263, 1200, 312) + arrow(1208, 315, 1327, 190);
body += `<text class="extreme" x="91" y="520">87688.0</text><path class="extreme-arrow" d="M80 517.500h7M83 515l-3 2.500 3 2.500"/>`;
body += `<text class="extreme" x="867" y="157">94555.0</text><path class="extreme-arrow" d="M914 154.500h7M918 152l3 2.500-3 2.500"/>`;
draw("price", 105, body);
drawAxis("price-axis", 105,
    [95, 94, 93, 92, 91, 90, 89, 88].map((p, i) => [p + "000.0", 130.5 + 53 * i]),
    `<rect x="0" y="253" width="64" height="20" fill="#237804"/><line class="tag-tick" x1="0" x2="5" y1="263.5" y2="263.5"/><text class="tag-price" x="32" y="267">92489.1</text>`);

// 成交量
body = grid(540, 602, [601.5]) + `<g class="bars">`;
vols.forEach((y, i) => {
    body += `<rect class="${candles[i][0] === "r" ? "pos" : "neg"}" x="${cx(i) - 6.5}" y="${y}" width="13" height="${598 - y}"/>`;
});
body += `</g><line class="estimate" x1="1136" x2="1148" y1="596.5" y2="596.5"/>` + curve(volMa5, "teal") + curve(volMa10, "orange");
draw("vol", 540, body);
drawAxis("vol-axis", 540, [], `<rect x="0" y="586" width="64" height="16" fill="#f9b84e"/><line class="tag-tick" x1="0" x2="5" y1="596.5" y2="596.5"/><text class="tag-vol" x="32" y="600">688</text>`);

// KDJ
draw("kdj", 602, grid(602, 711, [628.5, 699.5, 710.5], [642.5, 664.5, 685.5]) + curve(kLine, "teal") + curve(dLine, "orange") + curve(jLine, "pink"));
drawAxis("kdj-axis", 602, [["100.00", 628.5], ["50.00", 664.5], ["0.00", 699.5]]);

// MACD
body = grid(711, 822, [725.5, 756.5, 786.5, 816.5, 821.5]) + `<g class="bars">`;
macd.forEach((v, i) => {
    const y = Math.abs(v);
    const cls = (y < 786 ? "pos" : "neg") + (v < 0 ? "-h" : "");
    const top = Math.min(y, 786);
    const h = Math.abs(786 - y);
    body += v < 0
        ? `<rect class="${cls}" x="${cx(i) - 6}" y="${top + 0.5}" width="12" height="${h - 1}"/>`
        : `<rect class="${cls}" x="${cx(i) - 6.5}" y="${top}" width="13" height="${h}"/>`;
});
body += "</g>" + curve(dif, "teal") + curve(dea, "orange");
draw("macd", 711, body);
drawAxis("macd-axis", 711, [["1000.0", 725.5], ["500.0", 756.5], ["0.0", 786.5]]);

// 时间轴
const times = ["12月 8", "06", "12", "18", "12月 9", "06", "12", "18", "12月 10", "06", "12", "18", "12月 11", "06"];
draw("time", 822, times.map((t, i) => `<text class="${t.length > 2 ? "day" : "hour"}" x="${108.5 + i * 100}" y="837">${t}</text>`).join(""));
```
